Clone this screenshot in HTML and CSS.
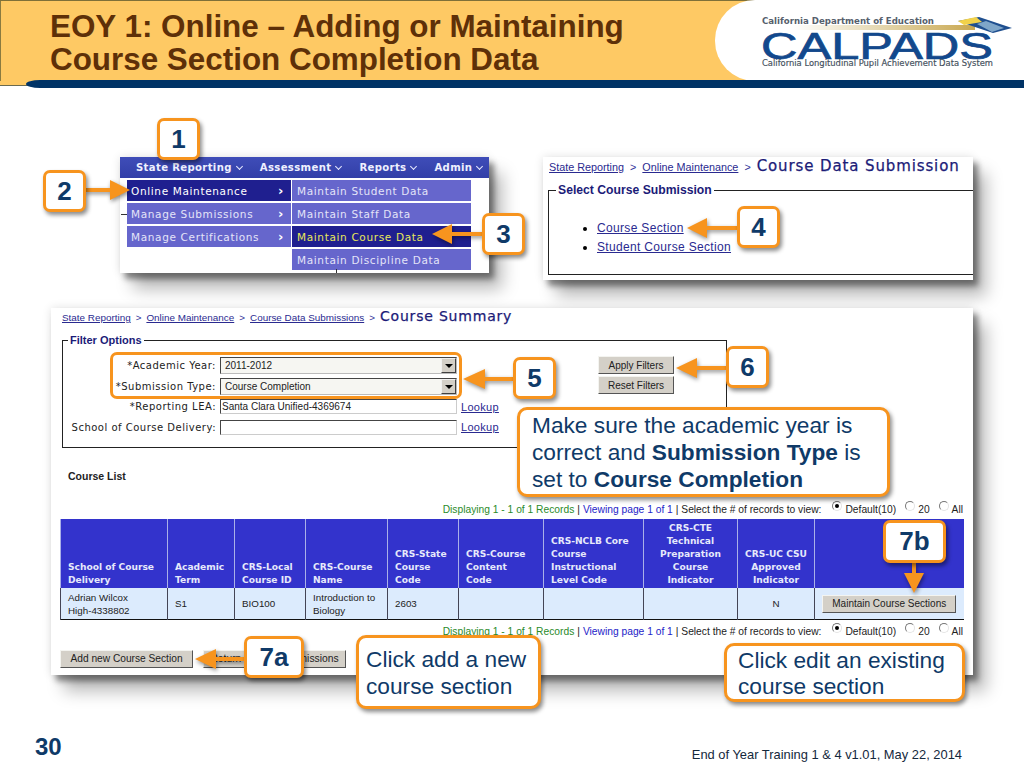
FILE: index.html
```html
<!DOCTYPE html>
<html lang="en">
<head>
<meta charset="utf-8">
<title>EOY 1: Online – Adding or Maintaining Course Section Completion Data</title>
<link rel="stylesheet" href="styles.css">
</head>
<body>
<div class="slide">
  <header class="header">
    <div class="header-main">
      <h1 class="title">EOY 1: Online – Adding or Maintaining<br>Course Section Completion Data</h1>
    </div>
    <div class="logo-area">
      <svg class="logo" width="309" height="81" viewBox="715 0 309 81">
        <defs>
          <linearGradient id="goldbar" x1="0" x2="1" y1="0" y2="0">
            <stop offset="0" stop-color="#ffffff"/>
            <stop offset=".4" stop-color="#e9dfc0"/>
            <stop offset="1" stop-color="#c9a850"/>
          </linearGradient>
        </defs>
        <rect x="790" y="25" width="185" height="5" fill="url(#goldbar)"/>
        <path d="M958 21 L979 17 L1012 28 L993 33 L972 26 Z" fill="#1f4f8f"/>
        <path d="M958 21 L976 17 L982 22 L964 25 Z" fill="#f2d24a"/>
        <path d="M977 24 L992 32 L1004 28 L986 21 Z" fill="#7fa6c9"/>
        <text class="logo-sub" x="762" y="24" textLength="172" lengthAdjust="spacingAndGlyphs">California Department of Education</text>
        <text class="logo-main" x="761" y="59" textLength="232" lengthAdjust="spacingAndGlyphs">CALPADS</text>
        <text class="logo-foot" x="762" y="66" textLength="231" lengthAdjust="spacingAndGlyphs">California Longitudinal Pupil Achievement Data System</text>
      </svg>
    </div>
  </header>
  <div class="navy-bar"></div>

  <section class="panel panel-menu">
    <nav class="topnav">
      <span class="nav-item">State Reporting<i class="chev"></i></span>
      <span class="nav-item">Assessment<i class="chev"></i></span>
      <span class="nav-item">Reports<i class="chev"></i></span>
      <span class="nav-item">Admin<i class="chev"></i></span>
    </nav>
    <div class="menus">
      <ul class="menu menu-left">
        <li class="active">Online Maintenance<b>›</b></li>
        <li>Manage Submissions<b>›</b></li>
        <li>Manage Certifications<b>›</b></li>
      </ul>
      <ul class="menu menu-right">
        <li>Maintain Student Data</li>
        <li>Maintain Staff Data</li>
        <li class="active current">Maintain Course Data</li>
        <li>Maintain Discipline Data</li>
      </ul>
    </div>
  </section>

  <section class="panel panel-submission">
    <div class="crumbs crumbs-large"><a>State Reporting</a><span class="sep">&gt;</span><a>Online Maintenance</a><span class="sep">&gt;</span><span class="crumb-title">Course Data Submission</span></div>
    <fieldset class="group group-submission">
      <legend>Select Course Submission</legend>
      <ul class="links">
        <li><a>Course Section</a></li>
        <li><a>Student Course Section</a></li>
      </ul>
    </fieldset>
  </section>

  <section class="panel panel-summary">
    <div class="crumbs"><a>State Reporting</a><span class="sep">&gt;</span><a>Online Maintenance</a><span class="sep">&gt;</span><a>Course Data Submissions</a><span class="sep">&gt;</span><span class="crumb-title">Course Summary</span></div>
    <fieldset class="group group-filter">
      <legend>Filter Options</legend>
      <div class="filter-layout">
        <div class="filter-grid">
          <label>*Academic Year:</label>
          <div class="select"><span>2011-2012</span><i class="dd"></i></div>
          <span></span>
          <label>*Submission Type:</label>
          <div class="select select-small"><span>Course Completion</span><i class="dd"></i></div>
          <span></span>
          <label>*Reporting LEA:</label>
          <div class="textbox">Santa Clara Unified-4369674</div>
          <a class="lookup">Lookup</a>
          <label>School of Course Delivery:</label>
          <div class="textbox"></div>
          <a class="lookup">Lookup</a>
        </div>
        <div class="filter-buttons">
          <button class="btn btn-filter">Apply Filters</button>
          <button class="btn btn-filter">Reset Filters</button>
        </div>
      </div>
    </fieldset>
    <h2 class="list-title">Course List</h2>
    <div class="records">
      <span class="rec-green">Displaying 1 - 1 of 1 Records</span> | <span class="rec-blue">Viewing page 1 of 1</span> | Select the # of records to view:
      <i class="radio radio-on"></i><span class="rec-opt">Default(10)</span><i class="radio"></i><span class="rec-opt">20</span><i class="radio"></i><span>All</span>
    </div>
    <table class="courses">
      <colgroup>
        <col class="c1"><col class="c2"><col class="c3"><col class="c4"><col class="c5"><col class="c6"><col class="c7"><col class="c8"><col class="c9"><col class="c10">
      </colgroup>
      <thead>
        <tr>
          <th>School of Course<br>Delivery</th>
          <th>Academic<br>Term</th>
          <th>CRS-Local<br>Course ID</th>
          <th>CRS-Course<br>Name</th>
          <th>CRS-State<br>Course<br>Code</th>
          <th>CRS-Course<br>Content<br>Code</th>
          <th>CRS-NCLB Core<br>Course<br>Instructional<br>Level Code</th>
          <th class="center">CRS-CTE<br>Technical<br>Preparation<br>Course<br>Indicator</th>
          <th class="center">CRS-UC CSU<br>Approved<br>Indicator</th>
          <th></th>
        </tr>
      </thead>
      <tbody>
        <tr>
          <td>Adrian Wilcox<br>High-4338802</td>
          <td>S1</td>
          <td>BIO100</td>
          <td>Introduction to<br>Biology</td>
          <td>2603</td>
          <td></td>
          <td></td>
          <td></td>
          <td class="center">N</td>
          <td class="center"><button class="btn btn-maintain">Maintain Course Sections</button></td>
        </tr>
      </tbody>
    </table>
    <div class="records records-bottom">
      <span class="rec-green">Displaying 1 - 1 of 1 Records</span> | <span class="rec-blue">Viewing page 1 of 1</span> | Select the # of records to view:
      <i class="radio radio-on"></i><span class="rec-opt">Default(10)</span><i class="radio"></i><span class="rec-opt">20</span><i class="radio"></i><span>All</span>
    </div>
    <div class="actions">
      <button class="btn btn-add">Add new Course Section</button>
      <button class="btn btn-return">Return to Data Submissions</button>
    </div>
  </section>

  <div class="highlight"></div>

  <svg class="arrows" width="1024" height="768" viewBox="0 0 1024 768">
    <g class="arrow-shape">
      <path d="M85 188 H110 V180 L130 190 L110 200 V192 H85 Z"/>
      <path d="M483 232 H452 V224 L432 234 L452 244 V236 H483 Z"/>
      <path d="M737 226 H707 V218 L687 228 L707 238 V230 H737 Z"/>
      <path d="M513 377 H485 V369 L463 379 L485 389 V381 H513 Z"/>
      <path d="M726 366 H697 V358 L676 368 L697 378 V370 H726 Z"/>
      <path d="M244 657 H216 V649 L195 659 L216 669 V661 H244 Z"/>
      <path d="M912 563 V573 H904 L914 593 L924 573 H916 V563 Z"/>
    </g>
  </svg>

  <div class="tag tag-1">1</div>
  <div class="tag tag-2">2</div>
  <div class="tag tag-3">3</div>
  <div class="tag tag-4">4</div>
  <div class="tag tag-5">5</div>
  <div class="tag tag-6">6</div>
  <div class="tag tag-7a">7a</div>
  <div class="tag tag-7b">7b</div>

  <div class="note note-check">Make sure the academic year is correct and <strong>Submission Type</strong> is set to <strong>Course Completion</strong></div>
  <div class="note note-add">Click add a new course section</div>
  <div class="note note-edit">Click edit an existing course section</div>

  <footer class="footer">
    <span class="page-no">30</span>
    <span class="foot-text">End of Year Training 1 &amp; 4 v1.01, May 22, 2014</span>
  </footer>
</div>
</body>
</html>
```
FILE: styles.css
```css
* { box-sizing: border-box; }
html, body { margin: 0; padding: 0; background: #fff; }
.slide {
  position: relative;
  z-index: 0;
  width: 1024px;
  height: 768px;
  overflow: hidden;
  background: #fff;
  font-family: "Liberation Sans", Arial, sans-serif;
}

/* Header */
.header { display: flex; height: 81px; background: #fec964; border-top: 1px solid #7f7038; }
.header-main { flex: 1; padding: 9px 0 0 49px; border-left: 1px solid #8a7a40; }
.title {
  margin: 0;
  font-size: 31.4px;
  line-height: 33px;
  font-weight: 700;
  color: #5e3008;
  white-space: nowrap;
}
.logo-area {
  width: 309px; height: 81px; margin-top: -1px;
  background: #fff; border-radius: 40px 0 0 40px; overflow: hidden;
}
.logo { display: block; }
.logo-sub { font: 700 8px "DejaVu Sans", sans-serif; fill: #56606c; }
.logo-foot { font: 400 8px "DejaVu Sans", sans-serif; fill: #44505c; stroke: #44505c; stroke-width: .15px; }
.logo-main { font: 400 36px "Liberation Sans", sans-serif; fill: #12488c; stroke: #12488c; stroke-width: .7px; }
.navy-bar {
  position: absolute; left: 26px; right: 0; top: 80px; height: 8px;
  background: #003366; border-radius: 14px 0 0 14px / 4px 0 0 4px;
}
.header::after {
  content: ""; position: absolute; left: 0; top: 81px; width: 30px; height: 4px;
  background: #fec964; border-bottom: 1px solid #6a6a50; z-index: -1;
}

/* Screenshot panels */
.panel {
  position: absolute;
  background: #fff;
  box-shadow: 5px 6px 6px rgba(0,0,0,.42), 13px 16px 16px rgba(0,0,0,.28), 0 0 9px rgba(0,0,0,.12);
}
.panel-menu { left: 120px; top: 157px; width: 369px; height: 116px; }
.panel-menu::before {
  content: ""; position: absolute; left: 1px; top: 57px; width: 6px; height: 1px; background: #333;
}
.panel-menu::after {
  content: ""; position: absolute; left: 216px; top: 112px; width: 1px; height: 4px; background: #333;
}
.panel-submission { left: 543px; top: 157px; width: 430px; height: 123px; padding: 0 0 0 5px; }
.panel-summary { left: 51px; top: 308px; width: 922px; height: 367px; padding: 0 0 0 9px; }

/* Menu */
.topnav {
  display: flex; align-items: center; gap: 18px;
  height: 21px; padding-left: 16px;
  background: linear-gradient(#3f4db8, #323fa8);
  color: #eef0ff;
  font: 700 10.1px "DejaVu Sans", sans-serif;
  letter-spacing: .35px;
  white-space: nowrap;
}
.nav-item { display: flex; align-items: center; gap: 5px; }
.chev {
  display: block; width: 5px; height: 5px; margin: -3px 0 0 0;
  border: solid #e8eaff; border-width: 0 1.5px 1.5px 0;
  transform: rotate(45deg);
}
.menus { display: flex; gap: 1px; padding: 2px 0 0 7px; align-items: flex-start; }
.menu { list-style: none; margin: 0; padding: 0; display: flex; flex-direction: column; gap: 2px; }
.menu li {
  display: flex; align-items: center; justify-content: space-between;
  height: 21px; padding: 0 7px 0 4px;
  background: #6666cc;
  color: #e4e4f8;
  font: 400 10.5px "DejaVu Sans", sans-serif;
  letter-spacing: .65px;
  white-space: nowrap;
}
.menu li b { font-size: 13px; color: #fff; }
.menu li.active { background: #1f1f8f; color: #fff; }
.menu li.current { color: #e8e85a; }
.menu-left { width: 164px; }
.menu-right { width: 179px; }
.menu-right li { padding-left: 5px; }

/* Breadcrumbs */
.crumbs {
  height: 18px;
  padding: 0 0 0 2px;
  font-size: 9.9px;
  line-height: 17px;
  color: #33339a;
  white-space: nowrap;
}
.crumbs a { text-decoration: underline; color: #2a2a90; }
.sep { margin: 0 5px; }
.crumb-title {
  font: 400 14px "DejaVu Sans", sans-serif;
  letter-spacing: .8px;
  color: #1b1b78;
  -webkit-text-stroke: .25px #1b1b78;
}
.crumbs-large { height: 16px; padding: 0 0 0 1px; font-size: 10.8px; line-height: 14px; }
.crumbs-large .sep { margin: 0 6px; }
.crumbs-large .crumb-title { font-size: 15px; letter-spacing: .88px; }

/* Fieldsets */
.group { margin: 0; padding: 0; border: 1px solid #222; min-width: 0; }
.group legend {
  margin-left: 7px; padding: 0 2px;
  font-size: 12.2px; font-weight: 700; color: #1b1b78; line-height: 14px;
}
.group-submission { margin-top: 10px; height: 92px; border-right: 0; }
.links { margin: 22px 0 0; padding: 0 0 0 48px; font-size: 12px; line-height: 19px; letter-spacing: .33px; }
.links a { color: #2a2a90; text-decoration: underline; }
.group-filter { margin: 7px 0 0 2px; width: 665px; height: 115px; }
.group-filter legend { margin-left: 5px; font-size: 11px; }

.filter-layout { display: flex; padding-top: 8px; }
.filter-grid {
  display: grid;
  grid-template-columns: 153px 237px 60px;
  grid-auto-rows: 20.7px;
  column-gap: 4px;
  align-items: center;
}
.filter-grid label {
  text-align: right;
  font: 400 10px "DejaVu Sans", sans-serif;
  letter-spacing: .5px;
  color: #222;
  white-space: nowrap;
}
.select {
  display: flex; align-items: center; justify-content: space-between;
  height: 17px; padding-left: 4px;
  border: 1px solid #bbb; border-top-color: #444; border-left-color: #444;
  background: #f6f6f2;
  font-size: 10px; color: #222;
}
.select-small { font-size: 10px; }
.dd {
  position: relative; display: block; width: 15px; height: 15px;
  background: #d4d0c8; border: 1px solid; border-color: #f0f0f0 #404040 #404040 #f0f0f0;
}
.dd::after {
  content: ""; position: absolute; left: 3px; top: 5px;
  border: 4px solid transparent; border-top-color: #000; border-bottom: 0;
}
.textbox {
  height: 15px; padding-left: 1px;
  border: 1px solid #ccc; border-top-color: #444; border-left-color: #444;
  background: #fff;
  font-size: 10px; line-height: 13px; color: #222;
}
.lookup { font-size: 11px; letter-spacing: .3px; color: #2a2a90; text-decoration: underline; }
.filter-buttons { display: flex; flex-direction: column; gap: 2px; margin: 1px 0 0 77px; }
.btn {
  display: block; margin: 0; padding: 0;
  background: #d4d0c8;
  border: 1px solid; border-color: #f4f4f0 #555 #555 #f4f4f0;
  font: 400 10px "Liberation Sans", sans-serif;
  color: #222;
  white-space: nowrap;
}
.btn-filter { width: 76px; height: 18px; }

.list-title { margin: 21px 0 0 8px; height: 14px; font-size: 10.5px; line-height: 14px; font-weight: 700; color: #222; }

/* Records lines */
.records {
  display: flex; align-items: center; justify-content: flex-end; gap: 3px;
  width: 903px; height: 14px; margin-top: 19px;
  font-size: 10.25px; color: #222; white-space: nowrap;
}
.rec-green { color: #2a8a2a; }
.rec-blue { color: #2424c8; }
.rec-opt { margin-right: 2px; }
.radio {
  display: block; width: 10px; height: 10px; margin: -7px 0 0 4px;
  border-radius: 50%; background: #fff;
  border: 1px solid; border-color: #777 #e4e4e4 #e4e4e4 #777;
  position: relative;
}
.radio-on { margin-left: 8px; }
.radio-on::after {
  content: ""; position: absolute; left: 2px; top: 2px; width: 4px; height: 4px;
  border-radius: 50%; background: #000;
}
.records-bottom { margin-top: 5px; }

/* Table */
.courses {
  table-layout: fixed; border-collapse: collapse;
  width: 903px; margin-top: 3px;
  border-bottom: 1px solid #111; border-left: 1px solid #445;
}
.c1 { width: 107px; } .c2 { width: 67px; } .c3 { width: 71px; } .c4 { width: 82px; } .c5 { width: 71px; }
.c6 { width: 85px; } .c7 { width: 100px; } .c8 { width: 94px; } .c9 { width: 77px; } .c10 { width: 149px; }
.courses th {
  height: 69px;
  padding: 0 2px 1px 7px;
  vertical-align: bottom;
  text-align: left;
  background: #3333cc;
  border-left: 1px solid #aab0e8;
  font: 700 9.1px/13px "DejaVu Sans", sans-serif;
  color: #e6e9fb;
  white-space: nowrap;
}
.courses td {
  height: 31px;
  padding: 1px 3px 0 7px;
  background: #dcebfd;
  border-left: 1px solid #445;
  font-size: 9.8px;
  line-height: 13px;
  color: #222;
  white-space: nowrap;
}
.courses .center { text-align: center; padding-left: 2px; padding-right: 2px; }
.btn-maintain { width: 134px; height: 18px; margin: 0 auto; font-size: 10px; }

.actions { display: flex; gap: 10px; margin-top: 11px; }
.btn-add { width: 133px; height: 18px; font-size: 10.2px; }
.btn-return { width: 143px; height: 18px; font-size: 10.3px; }

/* Annotations */
.highlight {
  position: absolute; left: 110px; top: 352px; width: 352px; height: 47px;
  border: 3px solid #f7941e; border-radius: 7px;
}
.arrows { position: absolute; left: 0; top: 0; pointer-events: none; }
.arrow-shape { fill: #f7941e; filter: drop-shadow(1px 2px 2px rgba(0,0,0,.45)); }
.tag, .note {
  position: absolute;
  background: #fff;
  border: 3px solid #f7941e;
  border-radius: 7px;
  box-shadow: 2px 3px 4px rgba(0,0,0,.45);
  color: #0f3a68;
}
.tag {
  display: flex; align-items: center; justify-content: center;
  width: 43px; height: 42px;
  font-size: 26px; font-weight: 700;
}
.tag-1 { left: 157px; top: 118px; }
.tag-2 { left: 43px; top: 170px; }
.tag-3 { left: 482px; top: 213px; }
.tag-4 { left: 737px; top: 206px; }
.tag-5 { left: 513px; top: 357px; }
.tag-6 { left: 726px; top: 346px; }
.tag-7a { left: 244px; top: 636px; width: 60px; }
.tag-7b { left: 883px; top: 520px; width: 63px; height: 43px; }
.note {
  padding: 2px 0 0 12px;
  font-size: 22.7px;
  line-height: 27px;
  border-radius: 10px;
}
.note-check { left: 517px; top: 407px; width: 373px; height: 90px; }
.note-add { left: 356px; top: 635px; width: 185px; height: 74px; padding: 8px 0 0 7px; }
.note-edit { left: 724px; top: 643px; width: 241px; height: 59px; padding: 1px 0 0 11px; line-height: 26px; }

/* Footer */
.footer { position: absolute; left: 35px; right: 62px; top: 733px; display: flex; justify-content: space-between; }
.page-no { font-size: 24px; line-height: 28px; font-weight: 700; color: #0f3a68; }
.foot-text { margin-top: 14px; font-size: 12.9px; line-height: 16px; color: #14283c; }
```
